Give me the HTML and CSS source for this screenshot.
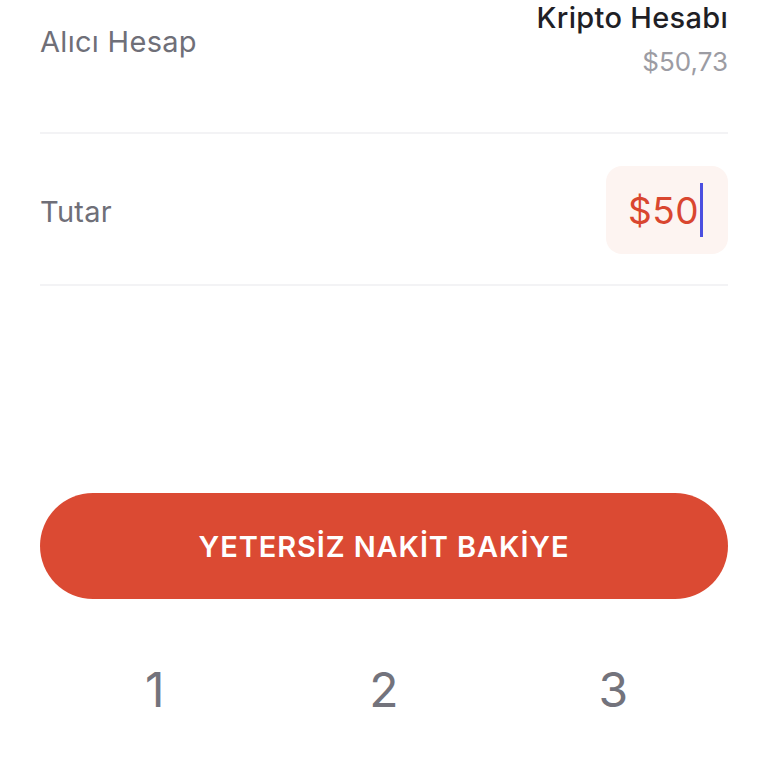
FILE: index.html
```html
<!DOCTYPE html>
<html lang="tr">
<head>
<meta charset="utf-8">
<link rel="stylesheet" href="styles.css">
</head>
<body>
<div class="page">
  <div class="row row-account">
    <div class="label label-account">Alıcı Hesap</div>
    <div class="account">
      <div class="account-name">Kripto Hesabı</div>
      <div class="account-balance">$50,73</div>
    </div>
  </div>
  <div class="row row-amount">
    <div class="label">Tutar</div>
    <div class="amount-box"><span class="amount">$50</span><span class="caret"></span></div>
  </div>
  <div class="spacer"></div>
  <button class="cta">YETERSİZ NAKİT BAKİYE</button>
  <div class="keypad">
    <div class="key">1</div>
    <div class="key">2</div>
    <div class="key">3</div>
  </div>
</div>
</body>
</html>
```
FILE: styles.css
```css
html, body {
  margin: 0;
  padding: 0;
  background: #ffffff;
}
body {
  font-family: Inter, "Noto Sans", sans-serif;
  width: 768px;
  height: 768px;
  overflow: hidden;
}
.page {
  padding: 0 40px;
  display: flex;
  flex-direction: column;
}
.row {
  display: flex;
  justify-content: space-between;
  border-bottom: 2px solid #f3f3f5;
}
.row-account {
  height: 132px;
  align-items: flex-start;
}
.label {
  font-size: 29px;
  color: #6f6f78;
  letter-spacing: 0.3px;
}
.label-account {
  margin-top: 24px;
}
.account {
  display: flex;
  flex-direction: column;
  align-items: flex-end;
  margin-top: 0;
}
.account-name {
  font-size: 29px;
  font-weight: 500;
  color: #1f1f26;
  letter-spacing: 0.3px;
  line-height: 36px;
}
.account-balance {
  font-size: 26px;
  color: #9c9ca3;
  line-height: 30px;
  margin-top: 11px;
}
.row-amount {
  height: 150px;
  align-items: center;
}
.row-amount .label {
  margin-top: 4px;
}
.amount-box {
  width: 122px;
  height: 88px;
  box-sizing: border-box;
  border-radius: 16px;
  background: #fdf4f1;
  display: flex;
  align-items: center;
  justify-content: flex-end;
  padding-right: 25px;
  margin-top: 2px;
}
.amount {
  font-size: 37px;
  color: #d9462f;
  letter-spacing: 0.5px;
}
.caret {
  width: 3px;
  height: 54px;
  background: #4b4fe0;
  margin-left: 1px;
}
.spacer {
  height: 207px;
}
.cta {
  height: 106px;
  border: none;
  border-radius: 53px;
  background: #db4a33;
  color: #ffffff;
  font-family: Inter, "Noto Sans", sans-serif;
  font-size: 29px;
  font-weight: 600;
  letter-spacing: 0.9px;
  padding: 0;
}
.keypad {
  display: grid;
  grid-template-columns: repeat(3, 1fr);
  margin-top: 57px;
}
.key {
  text-align: center;
  font-size: 48px;
  font-weight: 400;
  color: #73737c;
  line-height: 68px;
}
```
